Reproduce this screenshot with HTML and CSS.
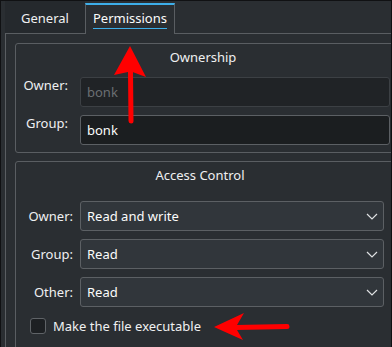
FILE: index.html
```html
<!DOCTYPE html>
<html>
<head>
<meta charset="utf-8">
<link rel="stylesheet" href="styles.css">
</head>
<body>
<div class="window">
  <div class="tabbar">
    <div class="tab tab-inactive">General</div>
    <div class="tab tab-active"><span class="tab-label">Permissions</span></div>
    <div class="tab-fill"></div>
  </div>
  <div class="pane">
    <div class="group group-owner">
      <div class="group-title">Ownership</div>
      <div class="form form-owner">
        <div class="label label-top">Owner:</div>
        <div class="lineedit disabled">bonk</div>
        <div class="label label-top">Group:</div>
        <div class="lineedit">bonk</div>
      </div>
    </div>
    <div class="group group-access">
      <div class="group-title">Access Control</div>
      <div class="form form-access">
        <div class="label">Owner:</div>
        <div class="combo"><span>Read and write</span><svg class="chev" width="12" height="7" viewBox="0 0 12 7"><path d="M1 1 L6 6 L11 1" fill="none" stroke="#dfe1e3" stroke-width="1.2"/></svg></div>
        <div class="label">Group:</div>
        <div class="combo"><span>Read</span><svg class="chev" width="12" height="7" viewBox="0 0 12 7"><path d="M1 1 L6 6 L11 1" fill="none" stroke="#dfe1e3" stroke-width="1.2"/></svg></div>
        <div class="label">Other:</div>
        <div class="combo"><span>Read</span><svg class="chev" width="12" height="7" viewBox="0 0 12 7"><path d="M1 1 L6 6 L11 1" fill="none" stroke="#dfe1e3" stroke-width="1.2"/></svg></div>
      </div>
      <div class="check-row">
        <div class="checkbox"></div>
        <div class="check-label">Make the file executable</div>
      </div>
    </div>
  </div>
  <svg class="annot" width="392" height="347" viewBox="0 0 392 347">
    <path d="M130 46 L146 77 L132.5 72 L128 72 L114 75 Z" fill="#ff0000"/>
    <line x1="130.5" y1="72" x2="131" y2="121" stroke="#ff0000" stroke-width="5" stroke-linecap="round"/>
    <path d="M214 327 L244 313 L237 325 L237 330 L243 340 Z" fill="#ff0000"/>
    <line x1="236" y1="327.5" x2="287" y2="326.5" stroke="#ff0000" stroke-width="5" stroke-linecap="round"/>
  </svg>
</div>
</body>
</html>
```
FILE: styles.css
```css
* { box-sizing: border-box; }
html, body { margin: 0; padding: 0; }
body {
  width: 392px;
  height: 347px;
  overflow: hidden;
  background: #2a2e32;
  font-family: "Noto Sans", "DejaVu Sans", sans-serif;
  font-size: 13px;
  color: #eff0f1;
}
.window {
  position: relative;
  width: 392px;
  height: 347px;
  overflow: hidden;
  border-top: 1px solid #101113;
  border-left: 1px solid #101113;
  border-right: 1px solid #101113;
  background: #2a2e32;
}
.tabbar {
  display: flex;
  height: 33px;
  padding-left: 4px;
}
.tab {
  line-height: 18px;
  white-space: nowrap;
  text-align: center;
}
.tab-inactive {
  width: 80px;
  height: 33px;
  padding-top: 8px;
  background: #25292d;
  border-bottom: 1px solid #5a5e62;
}
.tab-active {
  width: 90px;
  height: 31px;
  margin-top: 2px;
  padding-top: 4px;
  border-top: 2px solid #3daee9;
  border-left: 1px solid #5a5e62;
  border-right: 1px solid #5a5e62;
  background: #2a2e32;
}
.tab-label {
  display: inline-block;
  padding-bottom: 1px;
  border-bottom: 1px solid #3daee9;
  color: #fcfcfc;
}
.tab-fill {
  flex: 1;
  height: 33px;
  border-bottom: 1px solid #5a5e62;
}
.pane {
  margin-left: 4px;
  width: 420px;
  height: 320px;
  border-left: 1px solid #5a5e62;
  padding: 9px 0 0 9px;
}
.group {
  width: 380px;
  border: 1px solid #5a5e62;
  border-radius: 3px;
}
.group-owner {
  padding: 4px 4px 7px 0;
}
.group-access {
  margin-top: 8px;
  padding: 4px 10px 20px 0;
}
.group-title {
  height: 18px;
  line-height: 18px;
  text-align: center;
  color: #eff0f1;
}
.form {
  display: grid;
  row-gap: 8px;
  align-items: center;
}
.form-owner {
  margin-top: 11px;
  grid-template-columns: 52px 1fr;
  column-gap: 12px;
}
.form-access {
  margin-top: 17px;
  grid-template-columns: 57px 1fr;
  column-gap: 7px;
}
.label {
  text-align: right;
  line-height: 18px;
  white-space: nowrap;
}
.label-top {
  align-self: start;
  margin-top: -1px;
}
.lineedit {
  height: 30px;
  line-height: 28px;
  padding-left: 6px;
  background: #1b1e20;
  border: 1px solid #5c6064;
  border-radius: 3px;
  color: #fcfcfc;
}
.lineedit.disabled {
  background: #202326;
  border-color: #3c4044;
  color: #6b6f73;
}
.combo {
  height: 30px;
  display: flex;
  align-items: center;
  justify-content: space-between;
  padding: 0 5px 0 6px;
  background: #31363b;
  border: 1px solid #5c6064;
  border-radius: 3px;
  color: #fcfcfc;
}
.chev { display: block; margin-top: 1px; }
.check-row {
  margin-top: 10px;
  padding-left: 14px;
  display: flex;
  align-items: center;
}
.checkbox {
  width: 16px;
  height: 16px;
  margin-right: 7px;
  background: #1d2023;
  border: 1px solid #5f6367;
  border-radius: 3px;
}
.check-label {
  line-height: 18px;
  white-space: nowrap;
}
.annot {
  position: absolute;
  left: -1px;
  top: -1px;
  pointer-events: none;
}
```
